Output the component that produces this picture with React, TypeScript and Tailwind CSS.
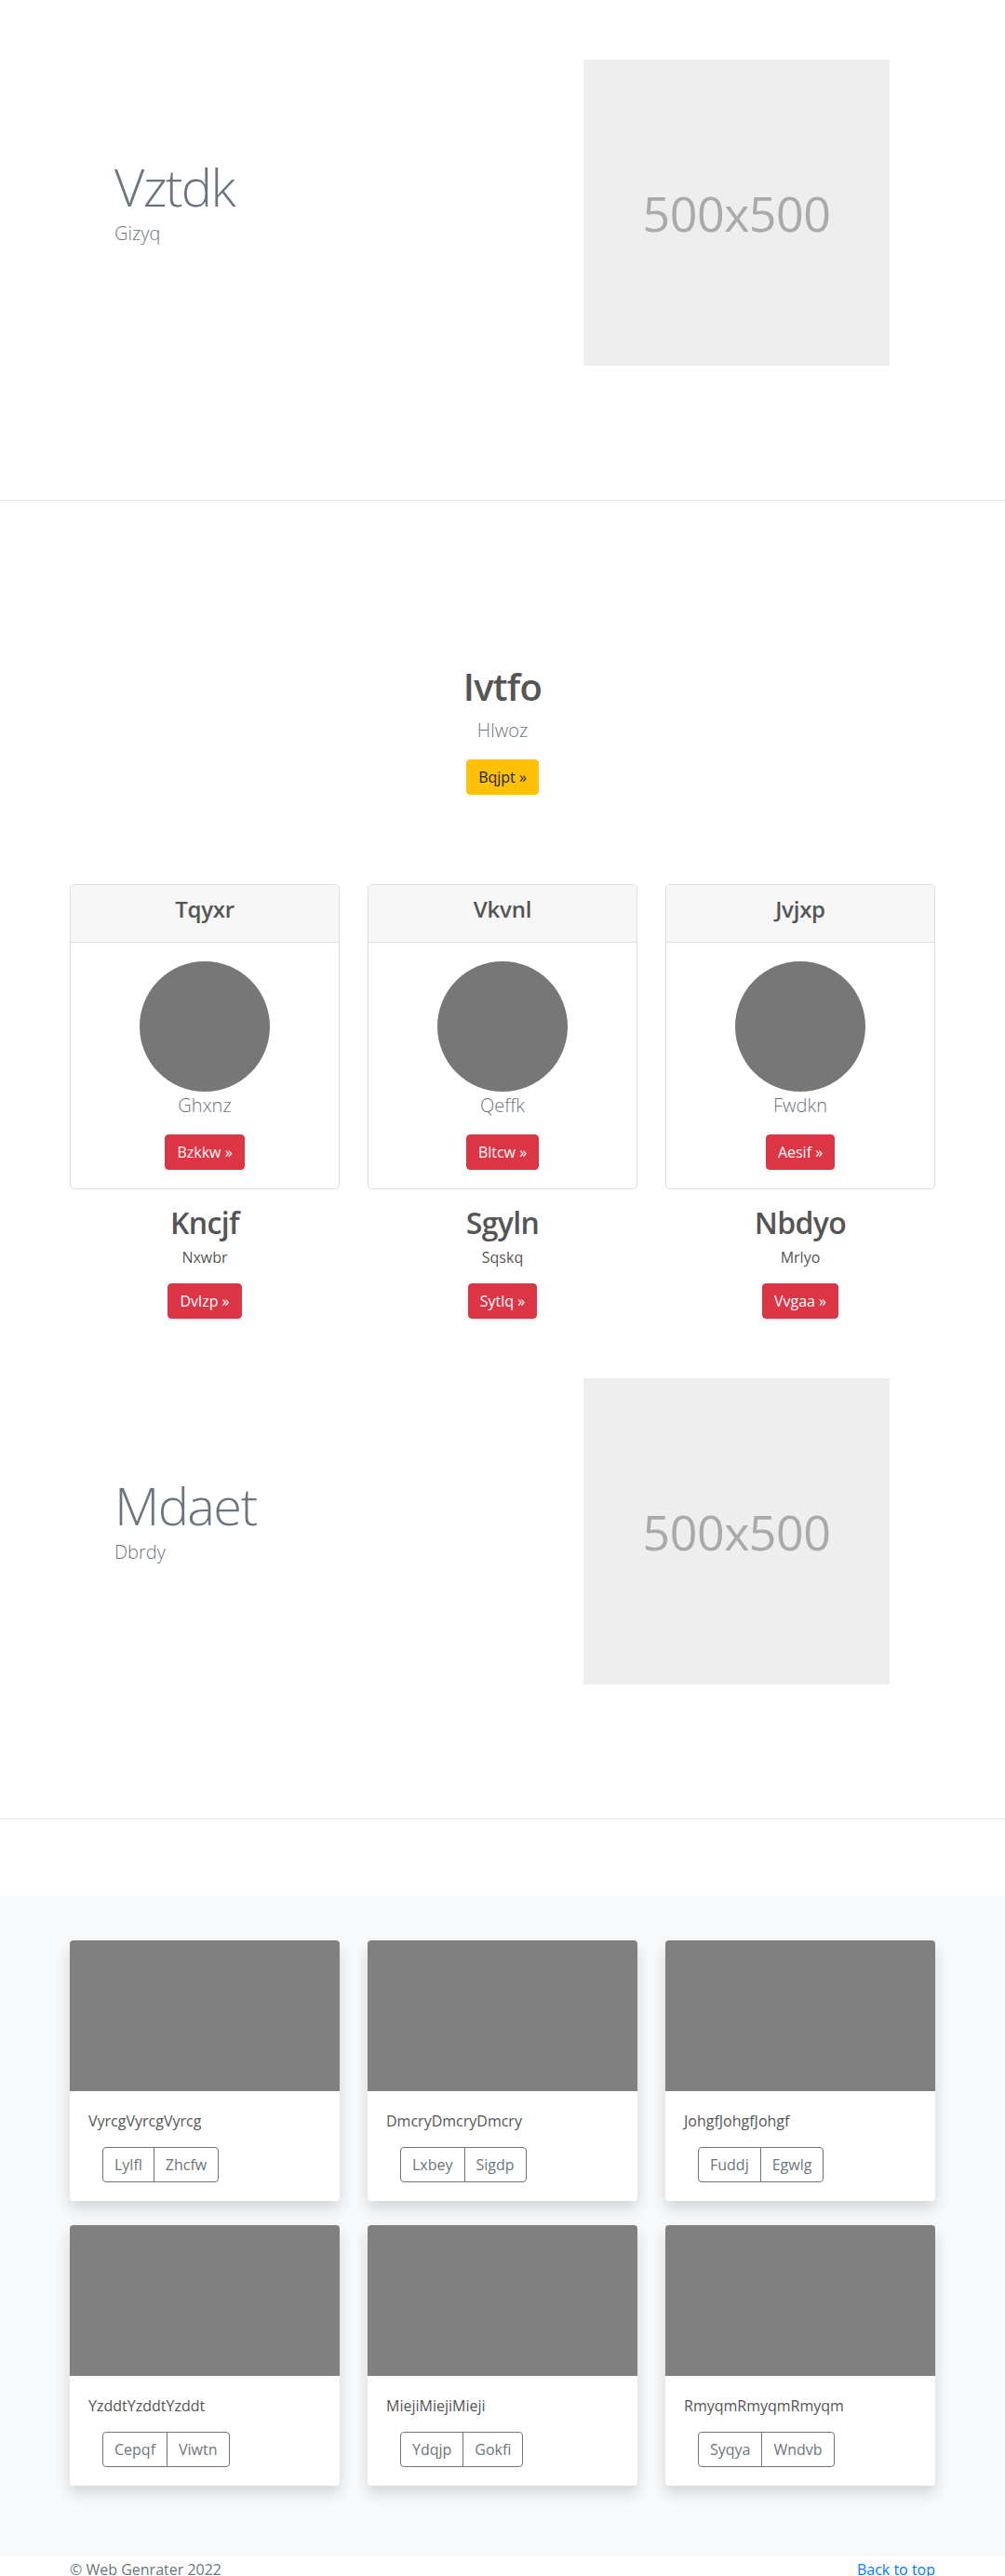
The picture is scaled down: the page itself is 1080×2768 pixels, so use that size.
import React from 'react';

interface Feature {
  title: string;
  subtitle: string;
  button: string;
}

interface AlbumItem {
  text: string;
  left: string;
  right: string;
}

const cards: Feature[] = [
  { title: 'Tqyxr', subtitle: 'Ghxnz', button: 'Bzkkw' },
  { title: 'Vkvnl', subtitle: 'Qeffk', button: 'Bltcw' },
  { title: 'Jvjxp', subtitle: 'Fwdkn', button: 'Aesif' },
];

const columns: Feature[] = [
  { title: 'Kncjf', subtitle: 'Nxwbr', button: 'Dvlzp' },
  { title: 'Sgyln', subtitle: 'Sqskq', button: 'Sytlq' },
  { title: 'Nbdyo', subtitle: 'Mrlyo', button: 'Vvgaa' },
];

const album: AlbumItem[] = [
  { text: 'VyrcgVyrcgVyrcg', left: 'Lylfl', right: 'Zhcfw' },
  { text: 'DmcryDmcryDmcry', left: 'Lxbey', right: 'Sigdp' },
  { text: 'JohgfJohgfJohgf', left: 'Fuddj', right: 'Egwlg' },
  { text: 'YzddtYzddtYzddt', left: 'Cepqf', right: 'Viwtn' },
  { text: 'MiejiMiejiMieji', left: 'Ydqjp', right: 'Gokfi' },
  { text: 'RmyqmRmyqmRmyqm', left: 'Syqya', right: 'Wndvb' },
];

function Hero({ title, subtitle }: { title: string; subtitle: string }) {
  return (
    <section className="border-b border-[#e5e5e5]">
      <div className="mx-auto flex w-[930px] pt-[64px] pb-[144px]">
        <div className="w-[465px] pl-[48px] pt-[103px]">
          <h1 className="text-[56px] font-light leading-[1.2] tracking-[-0.03em] text-[#6c757d]">{title}</h1>
          <p className="mt-[2px] text-[20px] font-light leading-[1.5] text-[#6c757d]">{subtitle}</p>
        </div>
        <div className="ml-[87px] flex h-[329px] w-[329px] items-center justify-center bg-[#eeeeee]">
          <span className="text-[52px] leading-none tracking-[-0.01em] text-[#aaaaaa]">500x500</span>
        </div>
      </div>
    </section>
  );
}

function RedButton({ label }: { label: string }) {
  return (
    <button className="rounded-[4px] border border-[#dc3545] bg-[#dc3545] px-3 py-[6px] text-[16px] leading-[1.5] text-white">
      {label} »
    </button>
  );
}

export default function App() {
  return (
    <div className="min-h-screen bg-white font-['Open_Sans','Noto_Sans',sans-serif] text-[#212529]">
      <Hero title="Vztdk" subtitle="Gizyq" />

      <section className="pt-[176px]">
        <div className="flex flex-col items-center">
          <h2 className="text-[40px] font-semibold leading-[1.2] tracking-[-0.02em] text-[#555]">Ivtfo</h2>
          <p className="mt-2 text-[20px] font-light leading-[1.5] text-[#6c757d]">Hlwoz</p>
          <button className="mt-4 rounded-[4px] border border-[#ffc107] bg-[#ffc107] px-3 py-[6px] text-[16px] leading-[1.5] text-[#212529]">
            Bqjpt »
          </button>
        </div>

        <div className="mx-auto mt-[96px] grid w-[930px] grid-cols-3 gap-x-[30px]">
          {cards.map((c) => (
            <div key={c.title} className="rounded-[4px] border border-[#dfdfdf] text-center">
              <div className="border-b border-[#dfdfdf] bg-[#f7f7f7] px-5 pt-3 pb-5">
                <h4 className="text-[24px] font-semibold leading-[1.2] tracking-[-0.01em] text-[#555]">{c.title}</h4>
              </div>
              <div className="flex flex-col items-center p-5">
                <div className="h-[140px] w-[140px] rounded-full bg-[#777777]" />
                <p className="mb-4 text-[20px] font-light leading-[1.5] text-[#6c757d]">{c.subtitle}</p>
                <RedButton label={c.button} />
              </div>
            </div>
          ))}
        </div>

        <div className="mx-auto mt-[17px] grid w-[930px] grid-cols-3 gap-x-[30px]">
          {columns.map((c) => (
            <div key={c.title} className="flex flex-col items-center">
              <h2 className="text-[32px] font-semibold leading-[1.2] tracking-[-0.02em] text-[#555]">{c.title}</h2>
              <p className="mt-[6px] mb-4 text-[16px] leading-[1.5] text-[#555]">{c.subtitle}</p>
              <RedButton label={c.button} />
            </div>
          ))}
        </div>
      </section>

      <Hero title="Mdaet" subtitle="Dbrdy" />

      <section className="mt-[82px] bg-[#f8f9fa] pt-12 pb-[50px]">
        <div className="mx-auto grid w-[930px] grid-cols-3 gap-x-[30px]">
          {album.map((a) => (
            <div
              key={a.text}
              className="mb-[26px] overflow-hidden rounded-[4px] bg-white shadow-[0_8px_16px_rgba(0,0,0,0.15)]"
            >
              <div className="h-[162px] bg-[#808080]" />
              <div className="p-5">
                <p className="mb-4 text-[16px] leading-[1.5] text-[#555]">{a.text}</p>
                <div className="ml-[15px] inline-flex">
                  <button className="rounded-l-[4px] border border-[#6c757d] px-3 py-[6px] text-[16px] leading-[1.5] text-[#6c757d]">
                    {a.left}
                  </button>
                  <button className="-ml-px rounded-r-[4px] border border-[#6c757d] px-3 py-[6px] text-[16px] leading-[1.5] text-[#6c757d]">
                    {a.right}
                  </button>
                </div>
              </div>
            </div>
          ))}
        </div>
      </section>

      <footer className="pt-[2px]">
        <div className="mx-auto flex w-[930px] justify-between text-[16px] leading-[1.5]">
          <p className="text-[#6c757d]">© Web Genrater 2022</p>
          <a href="#" className="text-[#007bff]">
            Back to top
          </a>
        </div>
      </footer>
    </div>
  );
}
